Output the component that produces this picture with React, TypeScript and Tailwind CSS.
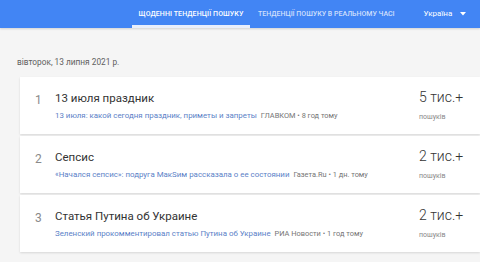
const items = [
  {
    rank: 1,
    title: "13 июля праздник",
    link: "13 июля: какой сегодня праздник, приметы и запреты",
    source: "ГЛАВКОМ • 8 год тому",
    count: "5 тис.+",
  },
  {
    rank: 2,
    title: "Сепсис",
    link: "«Начался сепсис»: подруга МакSим рассказала о ее состоянии",
    source: "Газета.Ru • 1 дн. тому",
    count: "2 тис.+",
  },
  {
    rank: 3,
    title: "Статья Путина об Украине",
    link: "Зеленский прокомментировал статью Путина об Украине",
    source: "РИА Новости • 1 год тому",
    count: "2 тис.+",
  },
]

export default function App() {
  return (
    <div className="w-[480px] h-[262px] overflow-hidden bg-[#f5f5f5] font-['Roboto',sans-serif]">
      <div className="h-[28px] bg-[#4285f4] flex items-stretch pl-[132px] shadow-[0_1px_2px_rgba(0,0,0,0.15)]">
        <div className="w-[118px] flex items-center justify-center border-b-[3px] border-[#e8eefb] pt-[3px]">
          <span className="text-[7px] font-medium text-white tracking-[0.1px]">ЩОДЕННІ ТЕНДЕНЦІЇ ПОШУКУ</span>
        </div>
        <div className="ml-[8px] flex items-center">
          <span className="text-[7px] font-medium text-white/75">ТЕНДЕНЦІЇ ПОШУКУ В РЕАЛЬНОМУ ЧАСІ</span>
        </div>
        <div className="ml-[29px] flex items-center gap-[8px]">
          <span className="text-[8px] text-white">Україна</span>
          <svg width="6" height="4" viewBox="0 0 6 4">
            <path d="M0 0 L6 0 L3 3.5 Z" fill="white" />
          </svg>
        </div>
      </div>

      <div className="pl-[17px] pt-[28px] text-[8.3px] text-[#5f5f5f]">вівторок, 13 липня 2021 р.</div>

      <div className="ml-[20px] mt-[9px] flex flex-col gap-[2px]">
        {items.map((item) => (
          <div
            key={item.rank}
            className="h-[57px] bg-white shadow-[0_1px_2px_rgba(0,0,0,0.12)] flex"
          >
            <div className="w-[35px] pl-[15px] text-[12px] text-[#8a8a8a] pt-[14px]">{item.rank}</div>
            <div className="flex-1 min-w-0 pt-[13px]">
              <div className="text-[11.5px] text-[#333] leading-[16px]">{item.title}</div>
              <div className="mt-[5px] text-[7.9px] leading-[10px] whitespace-nowrap">
                <span className="text-[#5b7fc7]">{item.link}</span>
                <span className="ml-[4px] text-[7.4px] text-[#757575]">{item.source}</span>
              </div>
            </div>
            <div className="w-[61px] pt-[12px]">
              <div className="text-[14px] font-light text-[#333] leading-[17px]">{item.count}</div>
              <div className="mt-[7px] text-[7px] text-[#888] leading-[9px]">пошуків</div>
            </div>
          </div>
        ))}
      </div>
    </div>
  )
}
